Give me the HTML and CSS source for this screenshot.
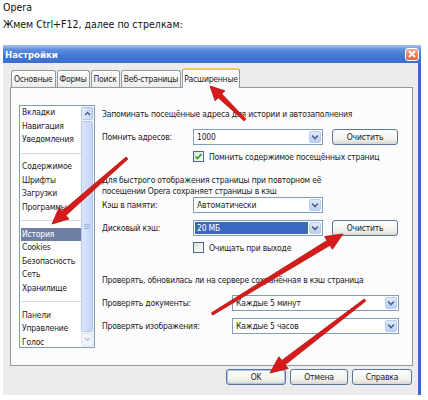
FILE: index.html
```html
<!DOCTYPE html>
<html lang="ru">
<head>
  <meta charset="UTF-8" />
  <title>Opera — Настройки</title>
  <link rel="stylesheet" href="styles.css">
</head>
<body>
  <div class="intro">
    <div>Opera</div>
    <div>Жмем Ctrl+F12, далее по стрелкам:</div>
  </div>

  <div class="dialog">
    <div class="titlebar">
      <span class="title">Настройки</span>
      <span class="close-btn">
        <svg width="8" height="8" viewBox="0 0 8 8"><path d="M1 1 L7 7 M7 1 L1 7" stroke="#fff" stroke-width="1.8"/></svg>
      </span>
    </div>

    <div class="dialog-body">
      <div class="tabs">
        <div class="tab">Основные</div>
        <div class="tab">Формы</div>
        <div class="tab">Поиск</div>
        <div class="tab">Веб-страницы</div>
        <div class="tab active">Расширенные</div>
      </div>

      <div class="tab-panel">
        <div class="side-list">
          <div class="items">
            <div class="item">Вкладки</div>
            <div class="item">Навигация</div>
            <div class="item">Уведомления</div>
            <div class="sep"></div>
            <div class="item">Содержимое</div>
            <div class="item">Шрифты</div>
            <div class="item">Загрузки</div>
            <div class="item">Программы</div>
            <div class="sep"></div>
            <div class="item selected">История</div>
            <div class="item">Cookies</div>
            <div class="item">Безопасность</div>
            <div class="item">Сеть</div>
            <div class="item">Хранилище</div>
            <div class="sep"></div>
            <div class="item">Панели</div>
            <div class="item">Управление</div>
            <div class="item">Голос</div>
          </div>
          <div class="scrollbar">
            <div class="sb-btn">
              <svg width="7" height="5" viewBox="0 0 7 5"><path d="M1 4 L3.5 1.5 L6 4" fill="none" stroke="#4d6185" stroke-width="1.4"/></svg>
            </div>
            <div class="sb-thumb"><span class="grip"></span></div>
            <div class="sb-btn disabled">
              <svg width="7" height="5" viewBox="0 0 7 5"><path d="M1 1 L3.5 3.5 L6 1" fill="none" stroke="#b7c3d8" stroke-width="1.4"/></svg>
            </div>
          </div>
        </div>

        <div class="options">
          <div class="note">Запоминать посещённые адреса для истории и автозаполнения</div>
          <div class="field">
            <span class="field-label">Помнить адресов:</span>
            <div class="combo">
              <span class="combo-value">1000</span>
              <span class="combo-arrow"><svg width="8" height="6" viewBox="0 0 8 6"><path d="M1 1.5 L4 4.5 L7 1.5" fill="none" stroke="#4d6185" stroke-width="1.6"/></svg></span>
            </div>
            <button class="btn">Очистить</button>
          </div>
          <div class="check">
            <span class="box"><svg width="9" height="9" viewBox="0 0 9 9"><path d="M1.5 4.5 L3.5 6.5 L7.5 2" fill="none" stroke="#21a121" stroke-width="1.7"/></svg></span>
            Помнить содержимое посещённых страниц
          </div>
          <div class="para">Для быстрого отображения страницы при повторном её<br>посещении Opera сохраняет страницы в кэш</div>
          <div class="field">
            <span class="field-label">Кэш в памяти:</span>
            <div class="combo">
              <span class="combo-value">Автоматически</span>
              <span class="combo-arrow"><svg width="8" height="6" viewBox="0 0 8 6"><path d="M1 1.5 L4 4.5 L7 1.5" fill="none" stroke="#4d6185" stroke-width="1.6"/></svg></span>
            </div>
          </div>
          <div class="field">
            <span class="field-label">Дисковый кэш:</span>
            <div class="combo">
              <span class="combo-value picked">20 МБ</span>
              <span class="combo-arrow"><svg width="8" height="6" viewBox="0 0 8 6"><path d="M1 1.5 L4 4.5 L7 1.5" fill="none" stroke="#4d6185" stroke-width="1.6"/></svg></span>
            </div>
            <button class="btn">Очистить</button>
          </div>
          <div class="check">
            <span class="box"></span>
            Очищать при выходе
          </div>
          <div class="note section">Проверять, обновилась ли на сервере сохранённая в кэш страница</div>
          <div class="field">
            <span class="field-label wide">Проверять документы:</span>
            <div class="combo long">
              <span class="combo-value">Каждые 5 минут</span>
              <span class="combo-arrow"><svg width="8" height="6" viewBox="0 0 8 6"><path d="M1 1.5 L4 4.5 L7 1.5" fill="none" stroke="#4d6185" stroke-width="1.6"/></svg></span>
            </div>
          </div>
          <div class="field">
            <span class="field-label wide">Проверять изображения:</span>
            <div class="combo long">
              <span class="combo-value">Каждые 5 часов</span>
              <span class="combo-arrow"><svg width="8" height="6" viewBox="0 0 8 6"><path d="M1 1.5 L4 4.5 L7 1.5" fill="none" stroke="#4d6185" stroke-width="1.6"/></svg></span>
            </div>
          </div>
        </div>
      </div>

      <div class="buttons">
        <button class="btn default">OK</button>
        <button class="btn">Отмена</button>
        <button class="btn">Справка</button>
      </div>
    </div>
  </div>

  <!-- red pointer arrows drawn over the dialog -->
  <svg class="arrows" width="428" height="400" viewBox="0 0 428 400">
    <g fill="#d71b1b" stroke="#b01010" stroke-width="0.8" stroke-linejoin="round">
      <polygon points="245.8,119.1 221.8,93.9 224.9,90.8 210,86 215.1,100.8 218.2,97.7 244.2,120.9"/>
      <polygon points="126.1,157.0 62.1,211.3 59.0,207.8 52,224 69.0,219.0 65.9,215.5 127.9,159.0"/>
      <polygon points="212.7,315.1 330.0,245.3 332.4,249.3 343,234 324.6,236.5 327.0,240.5 211.3,312.9"/>
      <polygon points="364.2,299.0 281.8,360.4 278.9,356.7 270,373 288.1,368.5 285.2,364.8 365.8,301.0"/>
    </g>
  </svg>
</body>
</html>
```

FILE: styles.css
```css
body {
  margin: 0;
  position: relative;
  background: #fff;
  color: #222;
  font-family: "DejaVu Sans Condensed", "Liberation Sans", sans-serif;
  font-size: 8.5px;
}
.intro {
  padding: 0 3px;
  font-size: 10.5px;
  line-height: 14px;
  color: #111;
}
.intro div + div {
  margin-top: 3px;
}

/* window */
.dialog {
  margin: 14px 0 0 3px;
  width: 418px;
  letter-spacing: -0.2px;
}
.titlebar {
  height: 18px;
  display: flex;
  align-items: center;
  justify-content: space-between;
  padding: 0 2px 0 2px;
  background: linear-gradient(to bottom, #a9c3ee 0%, #5f8edf 25%, #4277d4 60%, #3c6fcd 100%);
}
.title {
  color: #fff;
  font-weight: bold;
  font-size: 9.5px;
  letter-spacing: 0;
}
.close-btn {
  width: 14px;
  height: 13px;
  box-sizing: border-box;
  display: flex;
  align-items: center;
  justify-content: center;
  border: 1px solid #fff;
  border-radius: 3px;
  background: linear-gradient(to bottom, #f2a98c, #e0643e);
}
.dialog-body {
  height: 332px;
  box-sizing: border-box;
  padding-top: 5px;
  background: #ececef;
  border-right: 3px solid #3a68c6;
}

/* tabs */
.tabs {
  display: flex;
  align-items: flex-end;
  height: 19px;
  margin-left: 8px;
}
.tab {
  height: 17px;
  box-sizing: border-box;
  padding: 0 2px;
  display: flex;
  align-items: center;
  border: 1px solid #919b9c;
  border-bottom: none;
  border-radius: 3px 3px 0 0;
  background: linear-gradient(to bottom, #fff, #ececea);
}
.tab + .tab {
  margin-left: 1px;
}
.tab.active {
  height: 20px;
  margin-bottom: -1px;
  padding: 0 1px;
  border-top: 2px solid #f4c260;
  background: #fcfcfd;
  position: relative;
}
.tab-panel {
  height: 279px;
  box-sizing: border-box;
  margin: 0 5px 0 7px;
  padding: 17px 0 0 8px;
  display: flex;
  align-items: flex-start;
  border: 1px solid #919b9c;
  background: #fcfcfd;
}

/* left category list */
.side-list {
  width: 76px;
  height: 243px;
  box-sizing: border-box;
  display: flex;
  border: 1px solid #7f9db9;
  background: #fff;
}
.items {
  flex: 1;
  padding-left: 1px;
}
.item {
  height: 13.5px;
  line-height: 13.5px;
  padding-left: 1px;
  white-space: nowrap;
}
.item.selected {
  background: #6e7fa3;
  color: #fff;
}
.sep {
  height: 13.5px;
  display: flex;
  align-items: center;
}
.sep::before {
  content: "";
  flex: 1;
  border-top: 1px solid #d8d8d8;
}
.scrollbar {
  width: 12px;
  display: flex;
  flex-direction: column;
  padding: 1px 1px 1px 0;
  gap: 1px;
  background: #f3f3ef;
}
.sb-btn {
  height: 11px;
  display: flex;
  align-items: center;
  justify-content: center;
  border: 1px solid #b4c7ef;
  border-radius: 2px;
  background: linear-gradient(to right, #e4ecfc, #c4d4f6);
}
.sb-btn.disabled {
  border-color: #dde4f2;
  background: #f1f4fa;
}
.sb-thumb {
  flex: 1;
  display: flex;
  align-items: center;
  justify-content: center;
  border: 1px solid #b4c7ef;
  border-radius: 2px;
  background: linear-gradient(to right, #dbe5fb, #c6d5f6);
}
.grip {
  width: 6px;
  height: 5px;
  background: repeating-linear-gradient(to bottom, #9fb4e2 0 1px, transparent 1px 2px);
}

/* right option area */
.options {
  margin-left: 7px;
  display: flex;
  flex-direction: column;
}
.note {
  margin-top: 3px;
  line-height: 12px;
  white-space: nowrap;
}
.note.section {
  margin-top: 21px;
}
.field {
  margin-top: 7px;
  height: 16px;
  display: flex;
  align-items: center;
}
.note + .field {
  margin-top: 9px;
}
.para + .field {
  margin-top: 0;
}
.field-label {
  width: 91px;
  flex: none;
}
.field-label.wide {
  width: 130px;
}
.combo {
  width: 130px;
  height: 16px;
  box-sizing: border-box;
  display: flex;
  padding: 1px;
  border: 1px solid #7f9db9;
  background: #fff;
}
.combo.long {
  width: 167px;
}
.combo-value {
  flex: 1;
  padding-left: 2px;
  line-height: 12px;
  margin-right: 1px;
}
.combo-value.picked {
  background: #3b68c0;
  color: #fff;
}
.combo-arrow {
  width: 12px;
  display: flex;
  align-items: center;
  justify-content: center;
  border: 1px solid #b8cbf3;
  border-radius: 2px;
  box-sizing: border-box;
  background: linear-gradient(to bottom, #e2eafc, #bccff5);
}
.btn {
  height: 16px;
  padding: 0;
  font: inherit;
  letter-spacing: inherit;
  color: #222;
  border: 1px solid #5d7598;
  border-radius: 3px;
  background: linear-gradient(to bottom, #fff, #f0f0ec 70%, #d9d5cb);
}
.field .btn {
  width: 66px;
  margin-left: 9px;
}
.check {
  margin: 6px 0 0 91px;
  height: 11px;
  display: flex;
  align-items: center;
  gap: 5px;
}
.box {
  width: 11px;
  height: 11px;
  box-sizing: border-box;
  display: flex;
  align-items: center;
  justify-content: center;
  border: 1px solid #4a6a8c;
  background: linear-gradient(135deg, #dedfd9, #fff);
}
.para {
  margin-top: 13px;
  line-height: 11px;
}

/* bottom buttons */
.buttons {
  display: flex;
  justify-content: flex-end;
  gap: 4px;
  margin-top: 3px;
  padding-right: 6px;
}
.buttons .btn {
  width: 60px;
}
.buttons .btn:nth-child(2) {
  width: 58px;
}
.btn.default {
  box-shadow: inset 0 0 0 1px #a9c2ee;
}

.arrows {
  position: absolute;
  top: 0;
  left: 0;
  pointer-events: none;
}
```
